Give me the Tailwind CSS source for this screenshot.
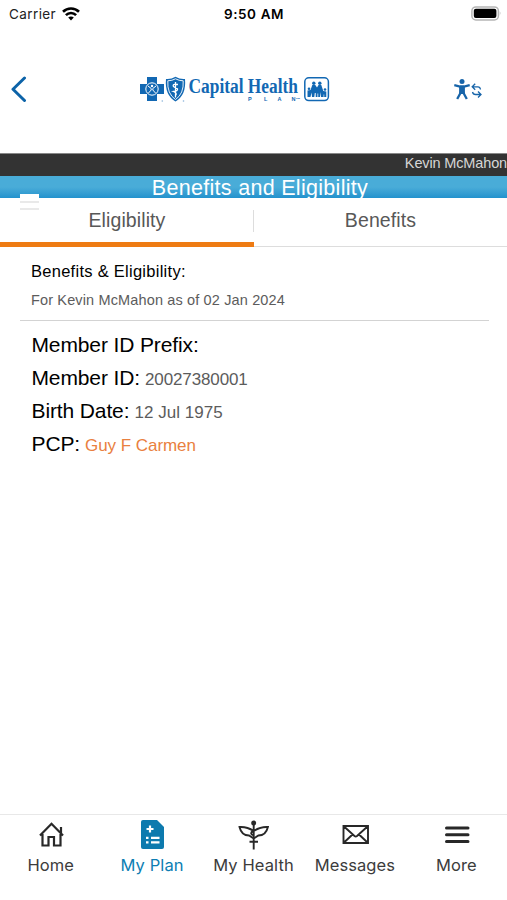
<!DOCTYPE html>
<html lang="en">
  <head>
    <meta charset="UTF-8" />
    <meta name="viewport" content="width=device-width, initial-scale=1.0" />
    <title>Benefits and Eligibility</title>
    <script src="https://cdn.jsdelivr.net/npm/@tailwindcss/browser@4"></script>
  </head>
  <body class="bg-white">
    <div class="flex flex-col h-[900px] w-[507px] overflow-hidden font-['Liberation_Sans',sans-serif] text-black">
      <!-- Status bar -->
      <div class="h-[27px] shrink-0 grid grid-cols-3 items-center font-[Inter,sans-serif]">
        <div class="flex items-center gap-[6px] pl-[9px] pt-px">
          <span class="text-[13.5px] tracking-[0.4px] text-[#222]">Carrier</span>
          <svg class="w-[18px] h-[14px]" viewBox="0 0 18 14" fill="none" stroke="#000" stroke-width="2.6">
            <path d="M1 4.700C5.400.4 12.600.4 17 4.700" />
            <path d="M3.900 8.100C6.800 5.200 11.200 5.200 14.100 8.100" />
            <path d="M9 13.400 6.200 10.500C7.800 9 10.200 9 11.800 10.500Z" fill="#000" stroke="none" />
          </svg>
        </div>
        <span class="text-center text-[13.5px] font-semibold tracking-[0.6px] pt-px pl-px whitespace-nowrap">9:50 AM</span>
        <div class="flex justify-end pr-[5px]">
          <svg class="w-[31px] h-[15px]" viewBox="0 0 31 15">
            <rect x=".9" y=".9" width="26.500" height="13" rx="4" fill="#fff" stroke="#b5b5b5" stroke-width="1.500" />
            <rect x="2.800" y="2.800" width="22.600" height="9.200" rx="2" />
            <path d="M28.800 5.200Q30.600 7.400 28.800 9.600Z" fill="#b5b5b5" />
          </svg>
        </div>
      </div>

      <!-- App header -->
      <header class="h-[126px] shrink-0 flex items-start pt-[49px] pl-[11px]">
        <svg class="w-4 h-[26px]" viewBox="0 0 16 26" fill="none" stroke="#0c63a8" stroke-width="3" stroke-linecap="round" stroke-linejoin="round">
          <path d="M13.500 2 2 13.200 13.500 24.500" />
        </svg>
        <svg class="w-[192px] h-[28px] ml-[112px]" viewBox="0 0 192 28" fill="#1268b3" font-family="Liberation Sans, sans-serif">
          <!-- blue cross -->
          <path d="M8 1H18V8H25V18H18V25H8V18H1V8H8Z" />
          <circle cx="13" cy="13" r="6.200" fill="none" stroke="#fff" stroke-width="1" />
          <circle cx="13" cy="10" r="1.200" fill="#fff" />
          <path d="M9 10 12.200 12.500V14L9.500 17M17 10 13.800 12.500V14L16.500 17" fill="none" stroke="#fff" stroke-width="1" />
          <!-- blue shield -->
          <path d="M27 3Q32 3.500 36.500.8Q41 3.500 46 3Q47.500 19 36.500 25.500Q25.500 19 27 3Z" />
          <path d="M28.800 4.800Q33 4.800 36.500 2.800Q40 4.800 44.200 4.800Q45 17.800 36.500 23.500Q28 17.800 28.800 4.800Z" fill="none" stroke="#fff" stroke-width=".9" />
          <path d="M36.500 6V21.500M39 8.500Q33 7.500 34.500 10.500L38.500 13Q39 15 34.500 15.500Q38 17 37 19" fill="none" stroke="#fff" stroke-width="1.300" />
          <circle cx="23.300" cy="25" r=".8" opacity=".5" />
          <circle cx="44.500" cy="25" r=".8" opacity=".5" />
          <text x="49.500" y="16.500" font-family="Liberation Serif, serif" font-size="20" font-weight="700" textLength="109.500" lengthAdjust="spacingAndGlyphs">Capital Health</text>
          <g font-size="5.500" font-weight="700">
            <text x="109" y="24.500">P</text>
            <text x="125" y="24.500">L</text>
            <text x="138.500" y="24.500">A</text>
            <text x="152.500" y="24.500">N</text>
            <text x="157" y="22.500" font-size="2.500">SM</text>
          </g>
          <!-- family badge -->
          <rect x="165.800" y="1.800" width="23.600" height="22.800" rx="4" fill="none" stroke="#1268b3" stroke-width="1.500" />
          <g>
            <circle cx="174.800" cy="7.200" r="1.700" />
            <circle cx="180.800" cy="7.200" r="1.700" />
            <circle cx="170" cy="12.800" r="1.300" />
            <circle cx="186" cy="13.500" r="1.300" />
            <path d="M173.300 9H176.300L178 11.500 179.500 9H182.300L184.300 15 187.300 15.500V21H185.200V18.500H184.600V21H182V16L181 21H179.200V17.500H178.500V21H176.700V17H175.800L175.300 21H173L172.500 16.500 171.500 21H168.500V14.500L171.500 14Z" />
          </g>
        </svg>
        <svg class="w-[29px] h-[26px] mt-[1px] ml-[122px]" viewBox="0 0 29 26" fill="none" stroke="#1764a9">
          <circle cx="9" cy="4.500" r="2.500" fill="#1764a9" stroke="none" />
          <path d="M1.300 8.200 7 9.500H11L16.700 8.200M4.200 22 8 15M13.800 22 10 15" stroke-width="2.300" />
          <path d="M6.100 9H11.900V17H6.100Z" fill="#1764a9" stroke="none" />
          <path d="M19.500 9.800H25Q27 9.800 27.500 12.500M22.200 6.800 19.200 9.800 22.200 12.800M28 17.500H22.500Q20 17.500 19.500 15M25 14.500 28 17.500 25 20.500" stroke-width="1.300" />
        </svg>
      </header>

      <!-- Member name and page title -->
      <div class="h-[23px] shrink-0 bg-[#333] border-t border-[#888] text-right text-[14.5px] tracking-[-0.14px] leading-[19px] text-[#d6d6d6] whitespace-nowrap">Kevin McMahon</div>
      <div class="relative h-[22px] shrink-0 bg-linear-to-b from-[#49acd8] from-50% to-[#2292cd] text-center text-[21.500px] leading-[25px] text-white">
        <h1 class="h-[25px] pl-[13px] tracking-[0.3px]">Benefits and Eligibility</h1>
        <div class="absolute left-5 top-[18px] w-[19px]">
          <div class="h-[5px] bg-white"></div>
          <div class="mt-[2px] h-[2px] bg-[#e9e9e9]"></div>
          <div class="mt-[5px] h-[2px] bg-[#e9e9e9]"></div>
        </div>
      </div>

      <!-- Tabs -->
      <div class="h-[49px] shrink-0 flex text-center text-[19.5px] tracking-[0.1px] leading-[45px] text-[#585858]">
        <div class="w-[254px] border-b-[5px] border-[#ee7b13]">Eligibility</div>
        <div class="relative flex-1 border-b border-[#ddd]">
          Benefits
          <i class="absolute left-[-1px] top-[12px] w-px h-[22px] bg-[#ddd]"></i>
        </div>
      </div>

      <!-- Eligibility details -->
      <main class="flex-1">
        <section class="mx-5 w-[469px] h-[74px] pl-[11px] pt-[13px] border-b border-[#d3d3d3]">
          <h2 class="text-[16.500px] tracking-[0.27px] leading-[22px]">Benefits &amp; Eligibility:</h2>
          <p class="mt-[8px] text-[14.5px] tracking-[0.14px] leading-[20px] text-[#5c5c5c]">For Kevin McMahon as of 02 Jan 2024</p>
        </section>
        <dl class="pl-[31.5px] pt-[7px] text-[21px] tracking-[-0.12px] leading-[33px]">
          <div class="h-[33px]"><dt>Member ID Prefix:</dt></div>
          <div class="h-[33px] flex items-baseline gap-[5px]">
            <dt>Member ID:</dt>
            <dd class="text-[17px] text-[#5c5c5c]">20027380001</dd>
          </div>
          <div class="h-[33px] flex items-baseline gap-[5px]">
            <dt>Birth Date:</dt>
            <dd class="text-[17px] tracking-[0.05px] text-[#5c5c5c]">12 Jul 1975</dd>
          </div>
          <div class="h-[33px] flex items-baseline gap-[5px]">
            <dt>PCP:</dt>
            <dd class="text-[17px] tracking-[-0.05px] text-[#e98040]">Guy F Carmen</dd>
          </div>
        </dl>
      </main>

      <!-- Bottom navigation -->
      <nav class="h-[86px] shrink-0 border-t border-[#e8e8e8] grid grid-cols-5 text-center font-[Inter,sans-serif] text-[16.500px] leading-[22px] tracking-[0.1px] text-[#3c3c3c] whitespace-nowrap">
        <a class="flex flex-col items-center pt-[4px]">
          <svg class="w-[30px] h-[32px] mb-[3px]" viewBox="0 0 30 32" fill="none" stroke="#282828" stroke-width="2.200">
            <path d="M4 16.500 15.500 4.800 27 16.500M6.500 15V26.500H12.500V18H18V26.500H24.500V15M25 14V8" />
          </svg>
          Home
        </a>
        <a class="flex flex-col items-center pt-[4px] text-[#0d7eb3]">
          <svg class="w-[30px] h-[32px] mb-[3px]" viewBox="0 0 30 32" fill="#0d7aae">
            <path d="M6 1H20L27 8V28Q27 30 25 30H6Q4 30 4 28V3Q4 1 6 1Z" />
            <path d="M13 6.500V13.500M9.500 10H16.500M9 18.800H11.500M14 18.800H22.500M9 23.300H11.500M14 23.300H22.500" stroke="#fff" stroke-width="2.200" />
          </svg>
          My Plan
        </a>
        <a class="flex flex-col items-center pt-[4px]">
          <svg class="w-[32px] h-[32px] mb-[3px]" viewBox="0 0 32 32" fill="none" stroke="#282828" stroke-width="1.900">
            <circle cx="16.700" cy="4" r="2.500" fill="#282828" stroke="none" />
            <path d="M16.700 4V30.500M16.700 12Q10 7.500 2.500 8Q4.500 16.500 12 16.500L16.700 19.500M16.700 12Q23.400 7.500 30.900 8Q28.900 16.500 21.400 16.500L16.700 19.500M16.700 12Q11.500 14 16.700 16.500M12.500 22.700H21" />
          </svg>
          My Health
        </a>
        <a class="flex flex-col items-center pt-[4px]">
          <svg class="w-[30px] h-[32px] mb-[3px]" viewBox="0 0 30 32" fill="none" stroke="#282828" stroke-width="1.900">
            <path d="M3.500 7H28V24H3.500ZM4 7.500 14.500 17Q15.700 18 17 17L27.500 7.500M4 23.500 12.500 15.500M27.500 23.500 19 15.500" />
          </svg>
          Messages
        </a>
        <a class="flex flex-col items-center pt-[4px]">
          <svg class="w-[30px] h-[32px] mb-[3px]" viewBox="0 0 30 32" stroke="#282828" stroke-width="3" stroke-linecap="round">
            <path d="M5.500 9H27M5.500 15.700H27M5.500 22.400H27" />
          </svg>
          More
        </a>
      </nav>
    </div>
  </body>
</html>
